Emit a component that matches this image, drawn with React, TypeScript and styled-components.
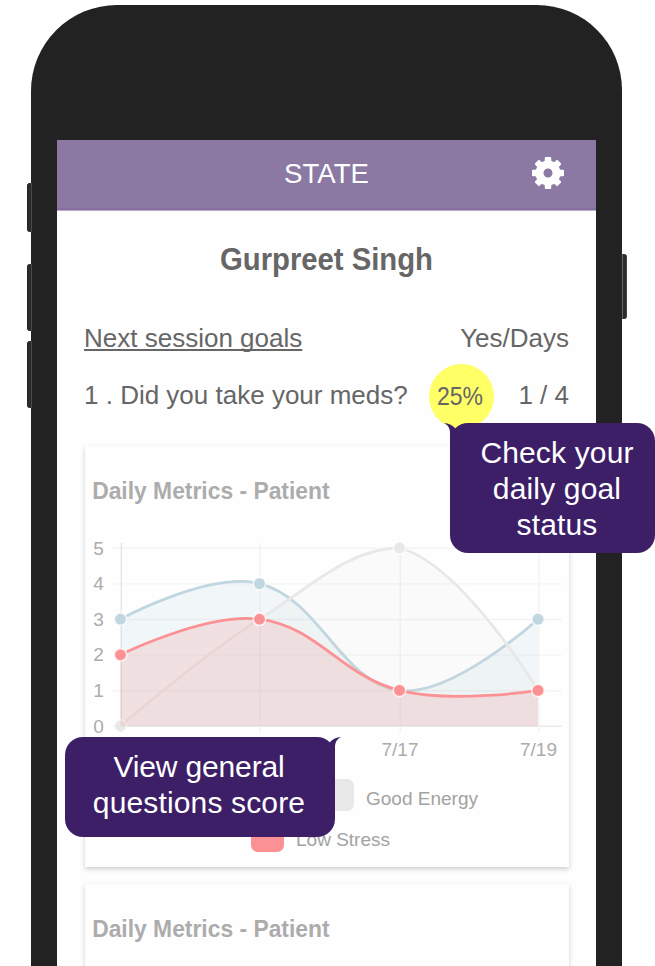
import React from "react";
import styled, { createGlobalStyle } from "styled-components";

const GlobalStyle = createGlobalStyle`
  * { box-sizing: border-box; }
  body {
    margin: 0;
    background: #fff;
    font-family: "Liberation Sans", Arial, Helvetica, sans-serif;
  }
`;

const Stage = styled.main`
  position: relative;
  width: 655px;
  height: 966px;
  padding: 5px 0 0 31px;
  overflow: hidden;
`;

const Phone = styled.div`
  width: 591.3px;
  height: 1100px;
  padding: 135px 26.3px 0 26px;
  background: #222;
  border-radius: 86px 85px 0 0;
`;

const SideButton = styled.span<{ $x: number; $top: number; $height: number; $right?: boolean }>`
  position: absolute;
  left: ${(p) => p.$x}px;
  top: ${(p) => p.$top}px;
  width: 4.5px;
  height: ${(p) => p.$height}px;
  background: #2b2b2b;
  border-radius: ${(p) => (p.$right ? "0 3px 3px 0" : "3px 0 0 3px")};
  border-left: ${(p) => (p.$right ? "1px solid #666" : "1px solid #222")};
  border-right: ${(p) => (p.$right ? "1px solid #444" : "1px solid #484848")};
`;

const Screen = styled.div`
  height: 100%;
  background: #fefefe;
  color: #666;
`;

const Header = styled.header`
  display: grid;
  grid-template-columns: 1fr auto 1fr;
  align-items: center;
  height: 71px;
  padding: 0 31px 4px 31px;
  background: #8b79a4;
  border-bottom: 1px solid #b9abc9;
  box-shadow: inset 0 -2px #846f9d;
`;

const HeaderTitle = styled.h1`
  grid-column: 2;
  margin: 0;
  padding-top: 2px;
  color: #fff;
  font-size: 27.6px;
  font-weight: 400;
  line-height: 32px;
`;

const SettingsButton = styled.button`
  justify-self: end;
  width: 34px;
  height: 34px;
  margin-top: -1px;
  padding: 0;
  border: 0;
  background: none;
`;

const Name = styled.h2`
  margin: 0;
  padding-top: 31px;
  height: 97px;
  font-size: 31px;
  line-height: 36px;
  text-align: center;
  transform: scaleX(0.944);
`;

const Goals = styled.section`
  padding: 0 27px;
  height: 138px;
  font-size: 26px;
`;

const GoalsHead = styled.div`
  display: flex;
  justify-content: space-between;
  height: 56px;
  padding-top: 15px;
  line-height: 30px;
`;

const GoalsTitle = styled.span`
  text-decoration: underline;
  text-decoration-thickness: 2px;
  text-underline-offset: 2px;
  text-decoration-skip-ink: none;
`;

const GoalRow = styled.div`
  display: flex;
  align-items: center;
  height: 64px;
`;

const Question = styled.span`
  width: 344.5px;
  padding-bottom: 2px;
  white-space: nowrap;
`;

const Percent = styled.span`
  display: grid;
  place-items: center;
  width: 65px;
  height: 65px;
  border-radius: 50%;
  background: #ffff66;
  font-size: 25px;
`;

const PercentText = styled.span`
  padding-right: 1px;
  transform: scaleX(0.92);
`;

const Score = styled.span`
  margin-left: auto;
  padding-bottom: 2px;
  white-space: nowrap;
`;

const Cards = styled.div`
  display: flex;
  flex-direction: column;
  gap: 17px;
  padding: 0 27px 0 27.5px;
`;

const Card = styled.article`
  height: 421px;
  background: #fefefe;
  box-shadow: 0 2px 5px rgba(0, 0, 0, 0.2);
`;

const CardTitle = styled.h3`
  margin: 0;
  padding: 31px 0 0 7.5px;
  height: 80px;
  color: #acacac;
  font-size: 24px;
  line-height: 28px;
  transform: scaleX(0.952);
  transform-origin: left;
  white-space: nowrap;
`;

const Chart = styled.svg`
  display: block;
  overflow: visible;
`;

const Legend = styled.div`
  display: grid;
  grid-template-rows: 32px 32px;
  row-gap: 9px;
  padding-top: 13px;
`;

const LegendItem = styled.div<{ $indent: number }>`
  display: flex;
  align-items: center;
  gap: 12.5px;
  padding-left: ${(p) => p.$indent}px;
  color: #a3a3a3;
  font-size: 19px;
`;

const Swatch = styled.i<{ $color: string }>`
  width: 32.5px;
  height: 32px;
  border-radius: 7px;
  background: ${(p) => p.$color};
`;

const LegendText = styled.span`
  padding-top: 7px;
`;

const Callout = styled.aside<{ $x: number; $y: number; $w: number; $h: number; $shift: number }>`
  position: absolute;
  left: ${(p) => p.$x}px;
  top: ${(p) => p.$y}px;
  width: ${(p) => p.$w}px;
  height: ${(p) => p.$h}px;
  padding: 12px ${(p) => Math.max(0, -p.$shift)}px 0 ${(p) => Math.max(0, p.$shift)}px;
  border-radius: 18px;
  background: #3d1f68;
  color: #fff;
  font-size: 30px;
  line-height: 36px;
  text-align: center;
`;

const CalloutLine = styled.span<{ $spacing?: number }>`
  display: block;
  letter-spacing: ${(p) => p.$spacing ?? 0.15}px;
  white-space: nowrap;
`;

const Tail = styled.svg<{ $right?: boolean }>`
  position: absolute;
  top: 0;
  ${(p) => (p.$right ? "right: -7px; transform: scaleX(-1);" : "left: -7px;")}
`;

const CalloutTail = ({ right }: { right?: boolean }) => (
  <Tail $right={right} width="20" height="20" viewBox="0 0 20 20">
    <path d="M1 0.2 C5 0 9 2 12 5 L12 18 L7 18 V10 C7 5 5 2 1 0.2Z" fill="#3d1f68" />
  </Tail>
);

const Gear = () => (
  <svg width="34" height="34" viewBox="-17 -17 34 34">
    <g fill="#fff">
      {[0, 45, 90, 135, 180, 225, 270, 315].map((a) => (
        <path key={a} transform={`rotate(${a})`} d="M-4-11 Q-3.2-12-3.2-13.2 V-15 Q-3.2-16-2.2-16 H2.2 Q3.2-16 3.2-15 V-13.2 Q3.2-12 4-11Z" />
      ))}
    </g>
    <circle r="8.5" fill="none" stroke="#fff" strokeWidth="8" />
  </svg>
);

const XS = [35.5, 174.5, 314.5, 453];
const TOP = 22;
const BOTTOM = 200;
const yOf = (v: number) => BOTTOM - (v * (BOTTOM - TOP)) / 5;

const SERIES = [
  { values: [3, 4, 1, 3], stroke: "#c0d6e1", fill: "rgba(172,204,219,0.16)" },
  { values: [0, 3, 5, 1], stroke: "#e8e8e8", fill: "rgba(215,215,215,0.1)" },
  { values: [2, 3, 1, 1], stroke: "#fc9194", fill: "rgba(246,131,135,0.19)" },
];

/** Smooth curve through the points; the end points have no handle of their own. */
function curve(values: number[]) {
  const pts = values.map((v, i) => ({ x: XS[i], y: yOf(v) }));
  const clamp = (y: number) => Math.min(BOTTOM, Math.max(TOP, y));
  const controls = pts.map((p, i) => {
    const a = pts[i - 1];
    const b = pts[i + 1];
    if (!a || !b) return { px: p.x, py: p.y, nx: p.x, ny: p.y };
    const d1 = Math.hypot(p.x - a.x, p.y - a.y);
    const d2 = Math.hypot(b.x - p.x, b.y - p.y);
    const f1 = (0.4 * d1) / (d1 + d2);
    const f2 = (0.4 * d2) / (d1 + d2);
    return {
      px: p.x - f1 * (b.x - a.x),
      py: clamp(p.y - f1 * (b.y - a.y)),
      nx: p.x + f2 * (b.x - a.x),
      ny: clamp(p.y + f2 * (b.y - a.y)),
    };
  });
  return pts.reduce(
    (d, p, i) =>
      i === 0
        ? `M${p.x} ${p.y}`
        : `${d} C${controls[i - 1].nx} ${controls[i - 1].ny} ${controls[i].px} ${controls[i].py} ${p.x} ${p.y}`,
    "",
  );
}

const MetricsChart = () => (
  <Chart width="484" height="240" viewBox="0 0 484 240">
    {[0, 1, 2, 3, 4, 5].map((v) => (
      <g key={v}>
        <line x1="28" x2="477" y1={yOf(v) + 0.3} y2={yOf(v) + 0.3} stroke={v ? "#f4f4f4" : "#e9e9e9"} strokeWidth="1.4" />
        <text x="8.3" y={yOf(v) + 6.5} fontSize="19" fill="#acacac">{v}</text>
      </g>
    ))}
    {XS.map((x, i) => (
      <line key={x} x1={x + 0.8} x2={x + 0.8} y1="17" y2="207" stroke={i ? "#f3f3f3" : "#e6e6e6"} strokeWidth="1.4" />
    ))}
    {SERIES.map((s) => (
      <g key={s.stroke}>
        <path d={`${curve(s.values)} V${BOTTOM} H${XS[0]}Z`} fill={s.fill} />
        <path d={curve(s.values)} fill="none" stroke={s.stroke} strokeWidth="2.8" />
        {s.values.map((v, i) => (
          <circle key={i} cx={XS[i]} cy={yOf(v)} r="6.2" fill={s.stroke} stroke="rgba(255,255,255,0.75)" strokeWidth="1.6" />
        ))}
      </g>
    ))}
    <g fontSize="19" fill="#acacac" textAnchor="middle">
      <text x="315" y="230.3">7/17</text>
      <text x="453.5" y="230.3">7/19</text>
    </g>
  </Chart>
);

export default function App() {
  return (
    <Stage>
      <GlobalStyle />
      <SideButton $x={27} $top={183} $height={49} />
      <SideButton $x={27} $top={264} $height={67} />
      <SideButton $x={27} $top={340.5} $height={67} />
      <SideButton $x={622} $top={254} $height={65} $right />
      <Phone>
        <Screen>
          <Header>
            <HeaderTitle>STATE</HeaderTitle>
            <SettingsButton aria-label="Settings"><Gear /></SettingsButton>
          </Header>
          <Name>Gurpreet Singh</Name>
          <Goals>
            <GoalsHead>
              <GoalsTitle>Next session goals</GoalsTitle>
              <span>Yes/Days</span>
            </GoalsHead>
            <GoalRow>
              <Question>1 . Did you take your meds?</Question>
              <Percent><PercentText>25%</PercentText></Percent>
              <Score>1 / 4</Score>
            </GoalRow>
          </Goals>
          <Cards>
            <Card>
              <CardTitle>Daily Metrics - Patient</CardTitle>
              <MetricsChart />
              <Legend>
                <LegendItem $indent={236.5}>
                  <Swatch $color="#e8e8e8" />
                  <LegendText>Good Energy</LegendText>
                </LegendItem>
                <LegendItem $indent={166.5}>
                  <Swatch $color="#fc9194" />
                  <LegendText>Low Stress</LegendText>
                </LegendItem>
              </Legend>
            </Card>
            <Card>
              <CardTitle>Daily Metrics - Patient</CardTitle>
            </Card>
          </Cards>
        </Screen>
      </Phone>
      <Callout $x={450} $y={423} $w={205} $h={130} $shift={9}>
        <CalloutTail />
        <CalloutLine>Check your</CalloutLine>
        <CalloutLine>daily goal</CalloutLine>
        <CalloutLine>status</CalloutLine>
      </Callout>
      <Callout $x={65} $y={737} $w={270} $h={100} $shift={-2}>
        <CalloutTail right />
        <CalloutLine $spacing={-0.15}>View general</CalloutLine>
        <CalloutLine>questions score</CalloutLine>
      </Callout>
    </Stage>
  );
}
